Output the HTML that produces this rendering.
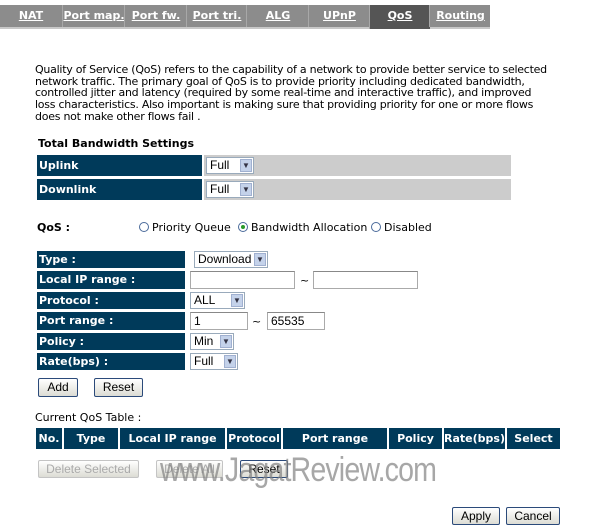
<!DOCTYPE html>
<html><head><meta charset="utf-8"><style>
body{margin:0;width:600px;height:526px;background:#fff;position:relative;overflow:hidden;font-family:"DejaVu Sans",Verdana,sans-serif;font-size:11px;color:#000}
.a{position:absolute}
.bar{left:0;top:5px;width:490px;height:22px;background:#8c8c8c;border-bottom:2px solid #c8c8c8}
.tab{top:5px;height:22px;line-height:22px;color:#fff;font-weight:bold;text-decoration:underline;text-align:center;font-size:11px;border-left:1px solid #a8a8a8}
.p{left:35px;top:64px;width:526px;line-height:11.7px;font-size:11px;letter-spacing:-0.25px}
.lab{background:#003a5a;color:#fff;font-weight:bold;font-size:11px;padding-left:2px;box-sizing:border-box}
.sel{background:#fff;border:1px solid #9ab;box-sizing:border-box;font-family:"Liberation Sans",Arial,sans-serif;font-size:12px;padding-left:3px;line-height:15px}
.sel i{position:absolute;right:1px;top:1px;width:12px;height:13px;background:#c4d2ea;border:1px solid #a0b0d0;box-sizing:border-box;font-style:normal;font-size:8px;line-height:11px;text-align:center;color:#334}
.inp{background:#fff;border:1px solid #aaa;border-top-color:#888;box-sizing:border-box;font-family:"Liberation Sans",Arial,sans-serif;font-size:12px;padding-left:3px;line-height:16px}
.btn{border:1px solid #2b4a7a;border-radius:2px;background:linear-gradient(#fff,#dcdcd4);box-sizing:border-box;text-align:center;font-family:"Liberation Sans",Arial,sans-serif;font-size:12px;line-height:17px}
.dis{border-color:#c4c4c4;color:#aaa}
.th{top:428px;height:21px;line-height:21px;background:#003a5a;color:#fff;font-weight:bold;text-align:center;font-size:11px}
.rad{width:10px;height:10px;border:1px solid #4a6a9a;border-radius:50%;background:#fff;box-sizing:border-box}
</style></head><body>
<div class="a bar"></div>
<div class="a tab" style="left:0;width:62px;border-left:0">NAT</div>
<div class="a tab" style="left:62px;width:62px">Port map.</div>
<div class="a tab" style="left:124px;width:62px">Port fw.</div>
<div class="a tab" style="left:186px;width:60px">Port tri.</div>
<div class="a tab" style="left:246px;width:62px">ALG</div>
<div class="a tab" style="left:308px;width:61px">UPnP</div>
<div class="a tab" style="left:369px;width:60px;background:#555;height:24px">QoS</div>
<div class="a tab" style="left:429px;width:61px">Routing</div>

<div class="a p">Quality of Service (QoS) refers to the capability of a network to provide better service to selected network traffic. The primary goal of QoS is to provide priority including dedicated bandwidth, controlled jitter and latency (required by some real-time and interactive traffic), and improved<br>loss characteristics. Also important is making sure that providing priority for one or more flows<br>does not make other flows fail .</div>

<div class="a" style="left:38px;top:137px;font-weight:bold">Total Bandwidth Settings</div>
<div class="a lab" style="left:37px;top:155px;width:165px;height:21px;line-height:21px">Uplink</div>
<div class="a" style="left:204px;top:155px;width:307px;height:21px;background:#ccc"></div>
<div class="a sel" style="left:206px;top:157px;width:48px;height:17px">Full<i>&#9660;</i></div>
<div class="a lab" style="left:37px;top:179px;width:165px;height:21px;line-height:21px">Downlink</div>
<div class="a" style="left:204px;top:179px;width:307px;height:21px;background:#ccc"></div>
<div class="a sel" style="left:206px;top:181px;width:48px;height:17px">Full<i>&#9660;</i></div>

<div class="a" style="left:37px;top:221px;font-weight:bold">QoS :</div>
<div class="a rad" style="left:139px;top:222px"></div>
<div class="a" style="left:152px;top:221px">Priority Queue</div>
<div class="a rad" style="left:238px;top:222px"><div style="width:4px;height:4px;background:#2a9a2a;border-radius:50%;margin:2px"></div></div>
<div class="a" style="left:251px;top:221px">Bandwidth Allocation</div>
<div class="a rad" style="left:371px;top:222px"></div>
<div class="a" style="left:384px;top:221px">Disabled</div>

<div class="a lab" style="left:37px;top:251px;width:148px;height:17px;line-height:17px">Type :</div>
<div class="a lab" style="left:37px;top:271px;width:148px;height:18px;line-height:18px">Local IP range :</div>
<div class="a lab" style="left:37px;top:292px;width:148px;height:17px;line-height:17px">Protocol :</div>
<div class="a lab" style="left:37px;top:312px;width:148px;height:18px;line-height:18px">Port range :</div>
<div class="a lab" style="left:37px;top:333px;width:148px;height:17px;line-height:17px">Policy :</div>
<div class="a lab" style="left:37px;top:353px;width:148px;height:17px;line-height:17px">Rate(bps) :</div>

<div class="a sel" style="left:194px;top:251px;width:74px;height:17px">Download<i>&#9660;</i></div>
<div class="a inp" style="left:190px;top:271px;width:105px;height:18px"></div>
<div class="a" style="left:300px;top:274px">~</div>
<div class="a inp" style="left:313px;top:271px;width:105px;height:18px"></div>
<div class="a sel" style="left:190px;top:292px;width:55px;height:17px">ALL<i>&#9660;</i></div>
<div class="a inp" style="left:190px;top:312px;width:58px;height:18px">1</div>
<div class="a" style="left:252px;top:315px">~</div>
<div class="a inp" style="left:267px;top:312px;width:58px;height:18px">65535</div>
<div class="a sel" style="left:190px;top:333px;width:44px;height:17px">Min<i>&#9660;</i></div>
<div class="a sel" style="left:190px;top:353px;width:48px;height:17px">Full<i>&#9660;</i></div>

<div class="a btn" style="left:38px;top:378px;width:40px;height:19px">Add</div>
<div class="a btn" style="left:94px;top:378px;width:49px;height:19px">Reset</div>

<div class="a" style="left:35px;top:411px">Current QoS Table :</div>
<div class="a th" style="left:36px;width:26px">No.</div>
<div class="a th" style="left:64px;width:54px">Type</div>
<div class="a th" style="left:120px;width:105px">Local IP range</div>
<div class="a th" style="left:227px;width:54px">Protocol</div>
<div class="a th" style="left:283px;width:104px">Port range</div>
<div class="a th" style="left:389px;width:53px">Policy</div>
<div class="a th" style="left:444px;width:61px">Rate(bps)</div>
<div class="a th" style="left:507px;width:53px">Select</div>

<div class="a btn dis" style="left:38px;top:460px;width:101px;height:18px">Delete Selected</div>
<div class="a btn dis" style="left:156px;top:460px;width:67px;height:18px">Delete All</div>
<div class="a btn" style="left:240px;top:460px;width:48px;height:18px">Reset</div>
<div class="a" style="left:160px;top:452px;font-family:'Liberation Sans',Arial,sans-serif;font-size:34px;color:rgba(130,130,130,0.7);letter-spacing:-1px;line-height:36px;transform:scaleX(0.84);transform-origin:0 0;white-space:nowrap">www.JagatReview.com</div>

<div class="a btn" style="left:452px;top:507px;width:48px;height:18px">Apply</div>
<div class="a btn" style="left:506px;top:507px;width:54px;height:18px">Cancel</div>
</body></html>
